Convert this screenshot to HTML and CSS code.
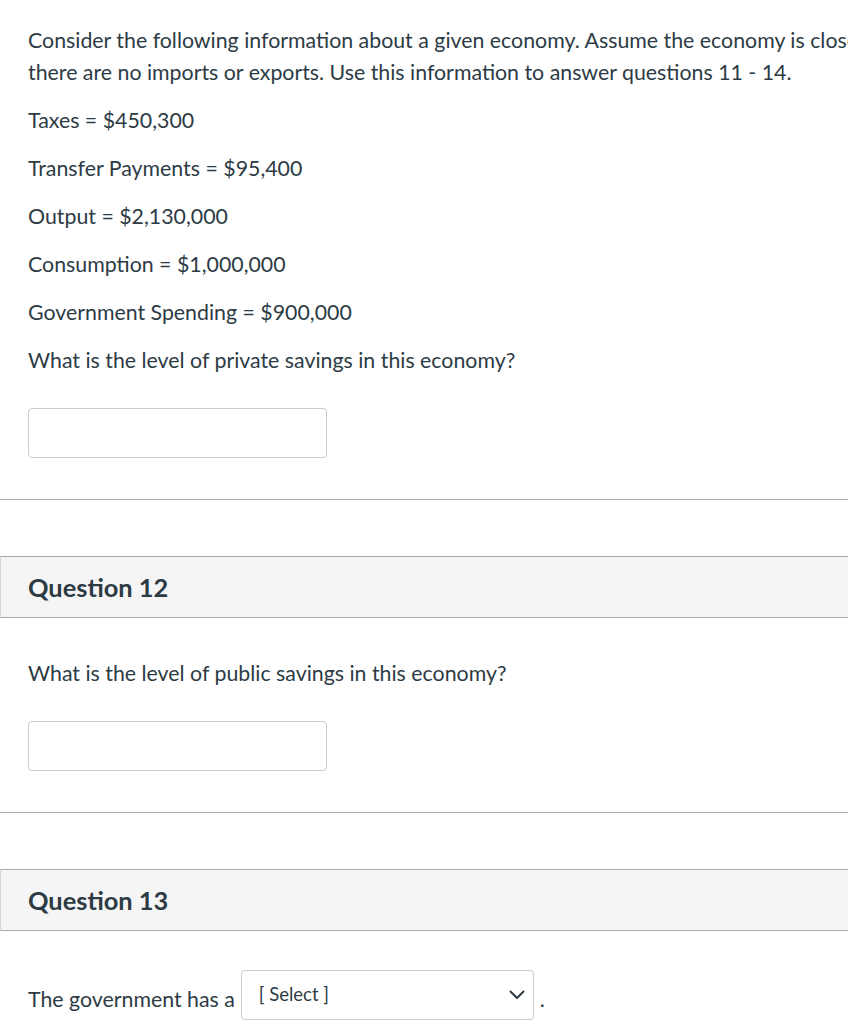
FILE: index.html
```html
<!DOCTYPE html>
<html lang="en">
<head>
<meta charset="utf-8">
<title>Quiz</title>
<link rel="stylesheet" href="styles.css">
</head>
<body>
<div class="page">
  <section class="question">
    <div class="q-body q-first">
      <p>Consider the following information about a given economy. Assume the economy is closed and<br>there are no imports or exports. Use this information to answer questions 11 - 14.</p>
      <p>Taxes = $450,300</p>
      <p>Transfer Payments = $95,400</p>
      <p>Output = $2,130,000</p>
      <p>Consumption = $1,000,000</p>
      <p>Government Spending = $900,000</p>
      <p>What is the level of private savings in this economy?</p>
      <input class="answer" type="text" aria-label="Answer">
    </div>
  </section>
  <div class="divider"></div>

  <section class="question">
    <header class="q-header">Question 12</header>
    <div class="q-body">
      <p>What is the level of public savings in this economy?</p>
      <input class="answer" type="text" aria-label="Answer">
    </div>
  </section>
  <div class="divider"></div>

  <section class="question">
    <header class="q-header">Question 13</header>
    <div class="q-body">
      <div class="select-row">
        <span class="select-label">The government has a</span>
        <div class="select-box">
          <span>[ Select ]</span>
          <svg class="chev" width="16" height="10" viewBox="0 0 16 10"><path d="M1.5 1.5 L8 8 L14.5 1.5" fill="none" stroke="#2d3b45" stroke-width="2" stroke-linecap="round" stroke-linejoin="round"/></svg>
        </div>
        <span class="select-label">.</span>
      </div>
    </div>
  </section>
</div>
</body>
</html>
```

FILE: styles.css
```css
html, body {
  margin: 0;
  padding: 0;
  background: #ffffff;
  overflow: hidden;
}
body {
  font-family: Lato, "Open Sans", "Liberation Sans", sans-serif;
  color: #2d3b45;
  font-size: 21.33px;
}
.page {
  width: 1000px;
}
.q-body {
  padding: 39px 0 41px 28px;
}
.q-first {
  padding-top: 24px;
}
.q-body p {
  margin: 0 0 16px 0;
  line-height: 32px;
}
.answer {
  display: block;
  margin: 32px 0 0 0;
  box-sizing: border-box;
  width: 299px;
  height: 50px;
  border: 1px solid #c7cdd1;
  border-radius: 4px;
  background: #fff;
  padding: 0 10px;
  font: inherit;
}
.divider {
  height: 1px;
  background: #aaaaaa;
  margin-bottom: 56px;
}
.q-header {
  background: #f5f5f5;
  border-top: 1px solid #aaaaaa;
  border-bottom: 1px solid #aaaaaa;
  border-left: 1px solid #d5d5d5;
  padding: 15px 0 15px 27px;
  font-size: 25.4px;
  line-height: 30px;
  font-weight: 700;
}
.select-row {
  display: flex;
  align-items: center;
}
.select-label {
  padding-top: 8px;
  line-height: 32px;
}
.select-box {
  box-sizing: border-box;
  width: 293px;
  height: 50px;
  margin: 0 6px 0 6px;
  border: 1px solid #c7cdd1;
  border-radius: 4px;
  display: flex;
  align-items: center;
  justify-content: space-between;
  padding: 0 8px 0 17px;
  font-size: 18.5px;
}
.select-box span {
  margin-top: -2px;
}
.chev {
  display: block;
}
```
